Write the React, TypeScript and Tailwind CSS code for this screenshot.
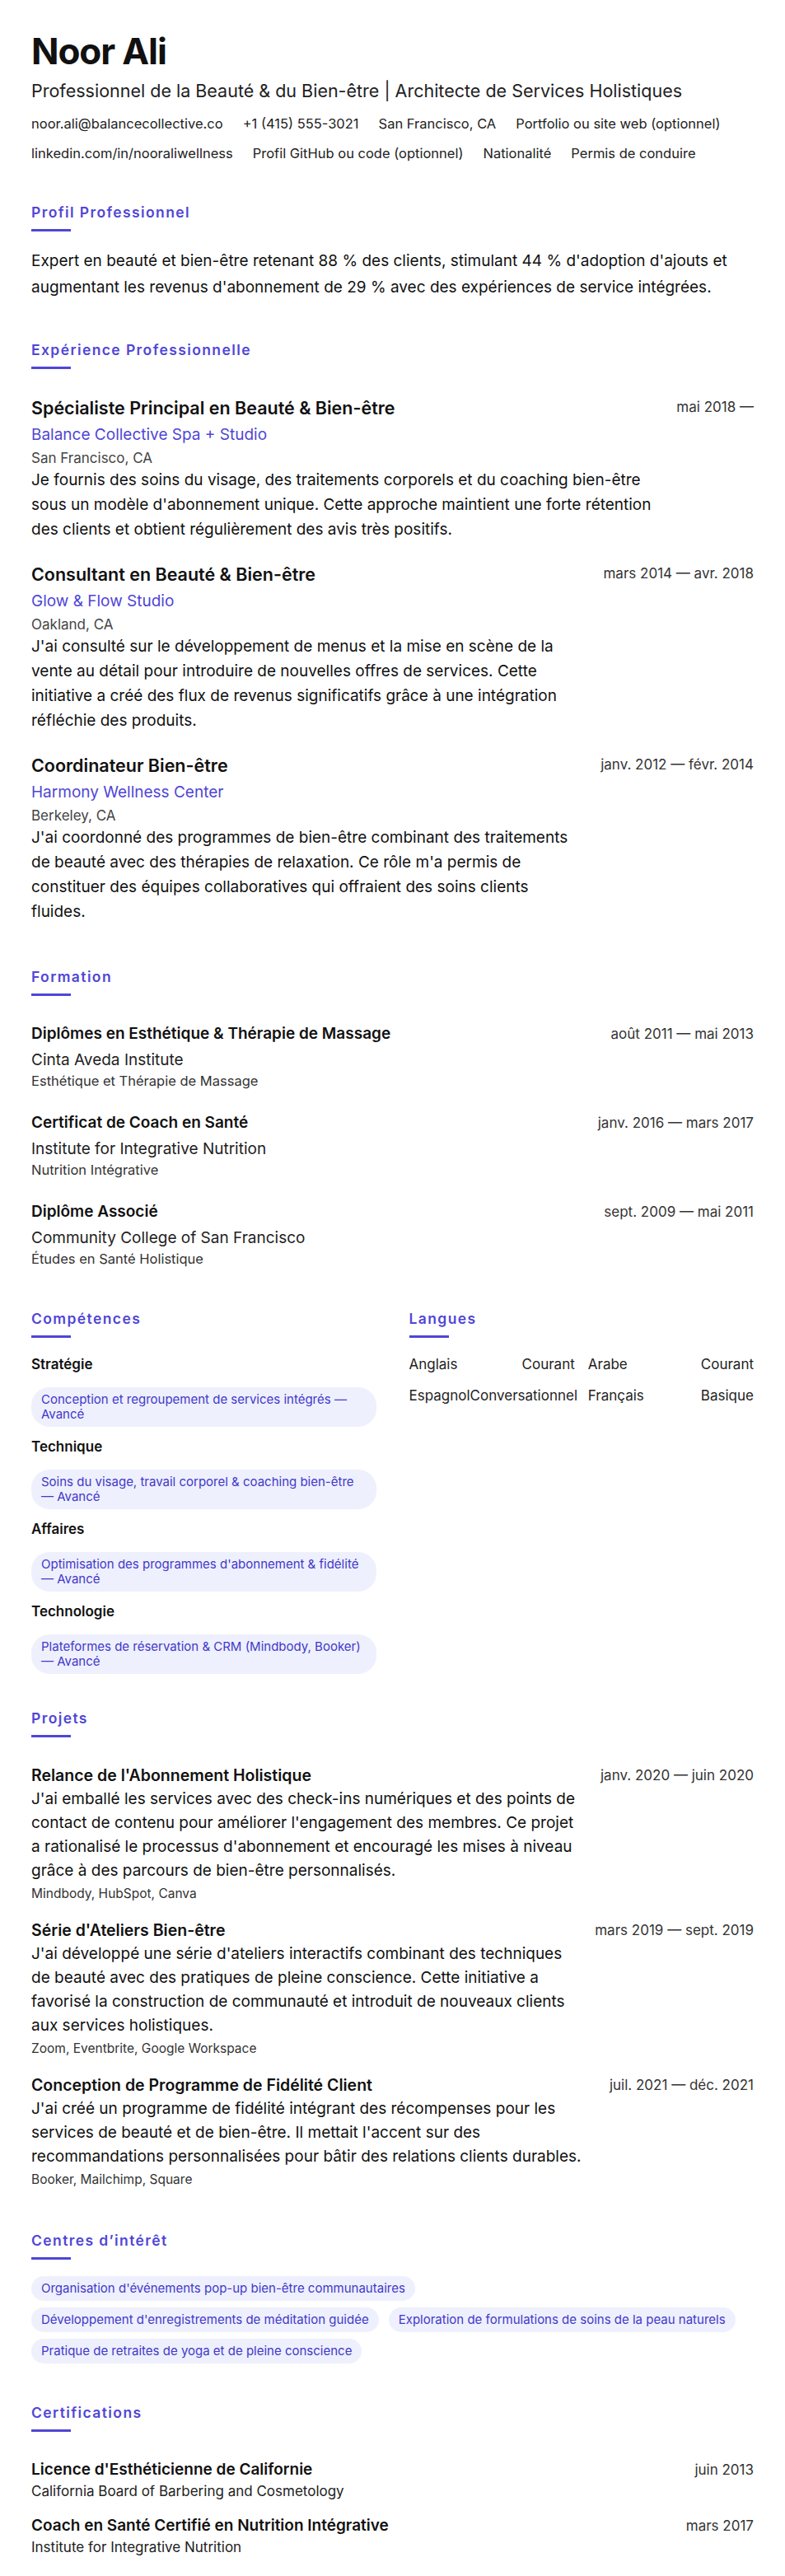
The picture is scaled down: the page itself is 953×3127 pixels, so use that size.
import React from "react";

const P = "text-[#5046d6]";

function H({ children }: { children: React.ReactNode }) {
  return (
    <div className="mb-5">
      <h2 className={`text-[17.5px] leading-6 font-semibold tracking-[0.08em] ${P}`}>{children}</h2>
      <div className="mt-2 h-[3px] w-12 bg-[#5046d6]" />
    </div>
  );
}

function Row({ left, date }: { left: React.ReactNode; date: string }) {
  return (
    <div className="flex justify-between gap-6">
      <div className="flex-1">{left}</div>
      <div className="whitespace-nowrap text-[17px] leading-7 text-[#333]">{date}</div>
    </div>
  );
}

const jobs = [
  { t: "Spécialiste Principal en Beauté & Bien-être", c: "Balance Collective Spa + Studio", l: "San Francisco, CA", d: "mai 2018 —", x: "Je fournis des soins du visage, des traitements corporels et du coaching bien-être sous un modèle d'abonnement unique. Cette approche maintient une forte rétention des clients et obtient régulièrement des avis très positifs." },
  { t: "Consultant en Beauté & Bien-être", c: "Glow & Flow Studio", l: "Oakland, CA", d: "mars 2014 — avr. 2018", x: "J'ai consulté sur le développement de menus et la mise en scène de la vente au détail pour introduire de nouvelles offres de services. Cette initiative a créé des flux de revenus significatifs grâce à une intégration réfléchie des produits." },
  { t: "Coordinateur Bien-être", c: "Harmony Wellness Center", l: "Berkeley, CA", d: "janv. 2012 — févr. 2014", x: "J'ai coordonné des programmes de bien-être combinant des traitements de beauté avec des thérapies de relaxation. Ce rôle m'a permis de constituer des équipes collaboratives qui offraient des soins clients fluides." },
];

const edu = [
  { t: "Diplômes en Esthétique & Thérapie de Massage", i: "Cinta Aveda Institute", f: "Esthétique et Thérapie de Massage", d: "août 2011 — mai 2013" },
  { t: "Certificat de Coach en Santé", i: "Institute for Integrative Nutrition", f: "Nutrition Intégrative", d: "janv. 2016 — mars 2017" },
  { t: "Diplôme Associé", i: "Community College of San Francisco", f: "Études en Santé Holistique", d: "sept. 2009 — mai 2011" },
];

const skills = [
  ["Stratégie", "Conception et regroupement de services intégrés — Avancé"],
  ["Technique", "Soins du visage, travail corporel & coaching bien-être — Avancé"],
  ["Affaires", "Optimisation des programmes d'abonnement & fidélité — Avancé"],
  ["Technologie", "Plateformes de réservation & CRM (Mindbody, Booker) — Avancé"],
];

const langs = [["Anglais", "Courant"], ["Arabe", "Courant"], ["Espagnol", "Conversationnel"], ["Français", "Basique"]];

const projects = [
  { t: "Relance de l'Abonnement Holistique", d: "janv. 2020 — juin 2020", x: "J'ai emballé les services avec des check-ins numériques et des points de contact de contenu pour améliorer l'engagement des membres. Ce projet a rationalisé le processus d'abonnement et encouragé les mises à niveau grâce à des parcours de bien-être personnalisés.", s: "Mindbody, HubSpot, Canva" },
  { t: "Série d'Ateliers Bien-être", d: "mars 2019 — sept. 2019", x: "J'ai développé une série d'ateliers interactifs combinant des techniques de beauté avec des pratiques de pleine conscience. Cette initiative a favorisé la construction de communauté et introduit de nouveaux clients aux services holistiques.", s: "Zoom, Eventbrite, Google Workspace" },
  { t: "Conception de Programme de Fidélité Client", d: "juil. 2021 — déc. 2021", x: "J'ai créé un programme de fidélité intégrant des récompenses pour les services de beauté et de bien-être. Il mettait l'accent sur des recommandations personnalisées pour bâtir des relations clients durables.", s: "Booker, Mailchimp, Square" },
];

const interests = [
  "Organisation d'événements pop-up bien-être communautaires",
  "Développement d'enregistrements de méditation guidée",
  "Exploration de formulations de soins de la peau naturels",
  "Pratique de retraites de yoga et de pleine conscience",
];

export default function App() {
  return (
    <div className="bg-white text-[#111] px-[38px] pt-[38px] pb-8" style={{ fontFamily: "Inter, 'Noto Sans', sans-serif" }}>
      <header>
        <h1 className="text-[44px] font-bold tracking-tight leading-[1.1]">Noor Ali</h1>
        <p className="mt-2 text-[21.5px] leading-8 text-[#222]">Professionnel de la Beauté &amp; du Bien-être | Architecte de Services Holistiques</p>
        <div className="mt-3 flex flex-wrap gap-x-6 gap-y-3 text-[16.5px] text-[#222] leading-6">
          {["noor.ali@balancecollective.co", "+1 (415) 555-3021", "San Francisco, CA", "Portfolio ou site web (optionnel)", "linkedin.com/in/nooraliwellness", "Profil GitHub ou code (optionnel)", "Nationalité", "Permis de conduire"].map((c) => (
            <span key={c}>{c}</span>
          ))}
        </div>
      </header>

      <section className="mt-[48px]">
        <H>Profil Professionnel</H>
        <p className="text-[19px] leading-8">Expert en beauté et bien-être retenant 88 % des clients, stimulant 44 % d'adoption d'ajouts et augmentant les revenus d'abonnement de 29 % avec des expériences de service intégrées.</p>
      </section>

      <section className="mt-[48px]">
        <H>Expérience Professionnelle</H>
        <div className="pt-3 flex flex-col gap-6">
          {jobs.map((j) => (
            <Row key={j.t} date={j.d} left={
              <div>
                <h3 className="text-[21.5px] font-semibold leading-[30px]">{j.t}</h3>
                <div className={`mt-1 text-[19px] leading-7 ${P}`}>{j.c}</div>
                <div className="mt-0.5 text-[17px] leading-6 text-[#444]">{j.l}</div>
                <p className="text-[19px] leading-[30px]">{j.x}</p>
              </div>
            } />
          ))}
        </div>
      </section>

      <section className="mt-[52px]">
        <H>Formation</H>
        <div className="pt-3 flex flex-col gap-[26px]">
          {edu.map((e) => (
            <Row key={e.t} date={e.d} left={
              <div>
                <h3 className="text-[19px] font-semibold leading-7">{e.t}</h3>
                <div className="mt-1 text-[19px] leading-7 text-[#222]">{e.i}</div>
                <div className="text-[16.5px] leading-[22px] text-[#333]">{e.f}</div>
              </div>
            } />
          ))}
        </div>
      </section>

      <section className="mt-[50px] grid grid-cols-2 gap-10">
        <div>
          <H>Compétences</H>
          <div className="flex flex-col gap-3">
            {skills.map(([h, s]) => (
              <div key={h}>
                <h3 className="text-[17px] leading-6 font-semibold">{h}</h3>
                <div className="mt-4 rounded-[22px] bg-[#eef0fd] px-3 py-1.5 text-[15px] leading-[18px] text-[#4338ca]">{s}</div>
              </div>
            ))}
          </div>
        </div>
        <div>
          <H>Langues</H>
          <div className="grid grid-cols-2 gap-x-4 gap-y-[14px] text-[17px] leading-6 text-[#222]">
            {langs.map(([n, l]) => (
              <div key={n} className="flex justify-between">
                <span>{n}</span>
                <span>{l}</span>
              </div>
            ))}
          </div>
        </div>
      </section>

      <section className="mt-[42px]">
        <H>Projets</H>
        <div className="pt-3 flex flex-col gap-5">
          {projects.map((p) => (
            <Row key={p.t} date={p.d} left={
              <div>
                <h3 className="text-[19.5px] font-semibold leading-7">{p.t}</h3>
                <p className="text-[19px] leading-[29px]">{p.x}</p>
                <div className="mt-1 text-[15.5px] leading-5 text-[#333]">{p.s}</div>
              </div>
            } />
          ))}
        </div>
      </section>

      <section className="mt-[52px]">
        <H>Centres d’intérêt</H>
        <div className="flex flex-wrap gap-x-3 gap-y-2">
          {interests.map((i) => (
            <span key={i} className="rounded-full bg-[#eef0fd] px-3 py-[5px] text-[15px] leading-5 text-[#4338ca]">{i}</span>
          ))}
        </div>
      </section>

      <section className="mt-[48px]">
        <H>Certifications</H>
        <div className="pt-3 flex flex-col gap-4">
          <Row date="juin 2013" left={<div><h3 className="text-[19px] font-semibold leading-7">Licence d'Esthéticienne de Californie</h3><div className="text-[17px] leading-6 text-[#222]">California Board of Barbering and Cosmetology</div></div>} />
          <Row date="mars 2017" left={<div><h3 className="text-[19px] font-semibold leading-7">Coach en Santé Certifié en Nutrition Intégrative</h3><div className="text-[17px] leading-6 text-[#222]">Institute for Integrative Nutrition</div></div>} />
        </div>
      </section>
    </div>
  );
}
